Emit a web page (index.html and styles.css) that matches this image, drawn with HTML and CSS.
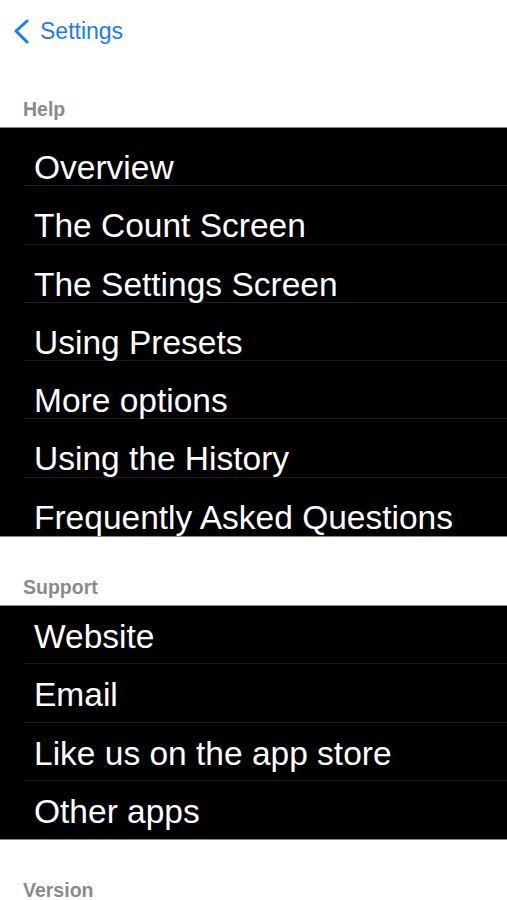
FILE: index.html
```html
<!DOCTYPE html>
<html lang="en">
<head>
    <meta charset="UTF-8">
    <meta name="viewport" content="width=device-width, initial-scale=1.0">
    <title>Help</title>
    <link rel="stylesheet" href="styles.css">
</head>
<body>

    <div class="nav">
        <svg class="back-icon" width="18" height="26" viewBox="0 0 18 26">
            <path d="M15 3 L4 13 L15 24" fill="none" stroke="#1b7cf2" stroke-width="3" stroke-linecap="round" stroke-linejoin="round"/>
        </svg>
        <span class="back-label">Settings</span>
    </div>

    <div class="section-header">Help</div>
    <div class="group">
        <div class="row">Overview</div>
        <div class="row">The Count Screen</div>
        <div class="row">The Settings Screen</div>
        <div class="row">Using Presets</div>
        <div class="row">More options</div>
        <div class="row">Using the History</div>
        <div class="row">Frequently Asked Questions</div>
    </div>

    <div class="section-header">Support</div>
    <div class="group group-centered">
        <div class="row">Website</div>
        <div class="row">Email</div>
        <div class="row">Like us on the app store</div>
        <div class="row">Other apps</div>
    </div>

    <div class="section-header">Version</div>

</body>
</html>
```

FILE: styles.css
```css
/* Light page, black grouped list */
body {
    background-color: #fff;
    font-family: "Liberation Sans", Arial, sans-serif;
    margin: 0;
    padding: 0;
}

/* Top navigation */
.nav {
    height: 59px;
    display: flex;
    align-items: center;
    padding: 3px 0 0 12px;
    box-sizing: border-box;
}

.back-icon {
    margin-right: 10px;
}

.back-label {
    color: #1b7cf2;
    font-size: 23px;
}

/* Section titles */
.section-header {
    height: 68px;
    display: flex;
    align-items: flex-end;
    box-sizing: border-box;
    padding: 0 0 8px 23px;
    color: #8a8a8e;
    font-size: 19.5px;
    font-weight: bold;
    line-height: 20px;
}

/* Grouped list */
.group {
    background-color: #000;
    border-top: 1px solid #8a8a8a;
    border-bottom: 1px solid #8a8a8a;
}

.row {
    height: 58.3px;
    box-sizing: border-box;
    margin-left: 24px;
    padding: 23px 0 0 10px;
    color: #fff;
    font-size: 33.5px;
    line-height: 33px;
    white-space: nowrap;
    border-bottom: 1px solid #1c1c1c;
}

.row:last-child {
    border-bottom: none;
}

/* Support rows sit higher in their cells */
.group-centered .row {
    padding-top: 14px;
}
```
